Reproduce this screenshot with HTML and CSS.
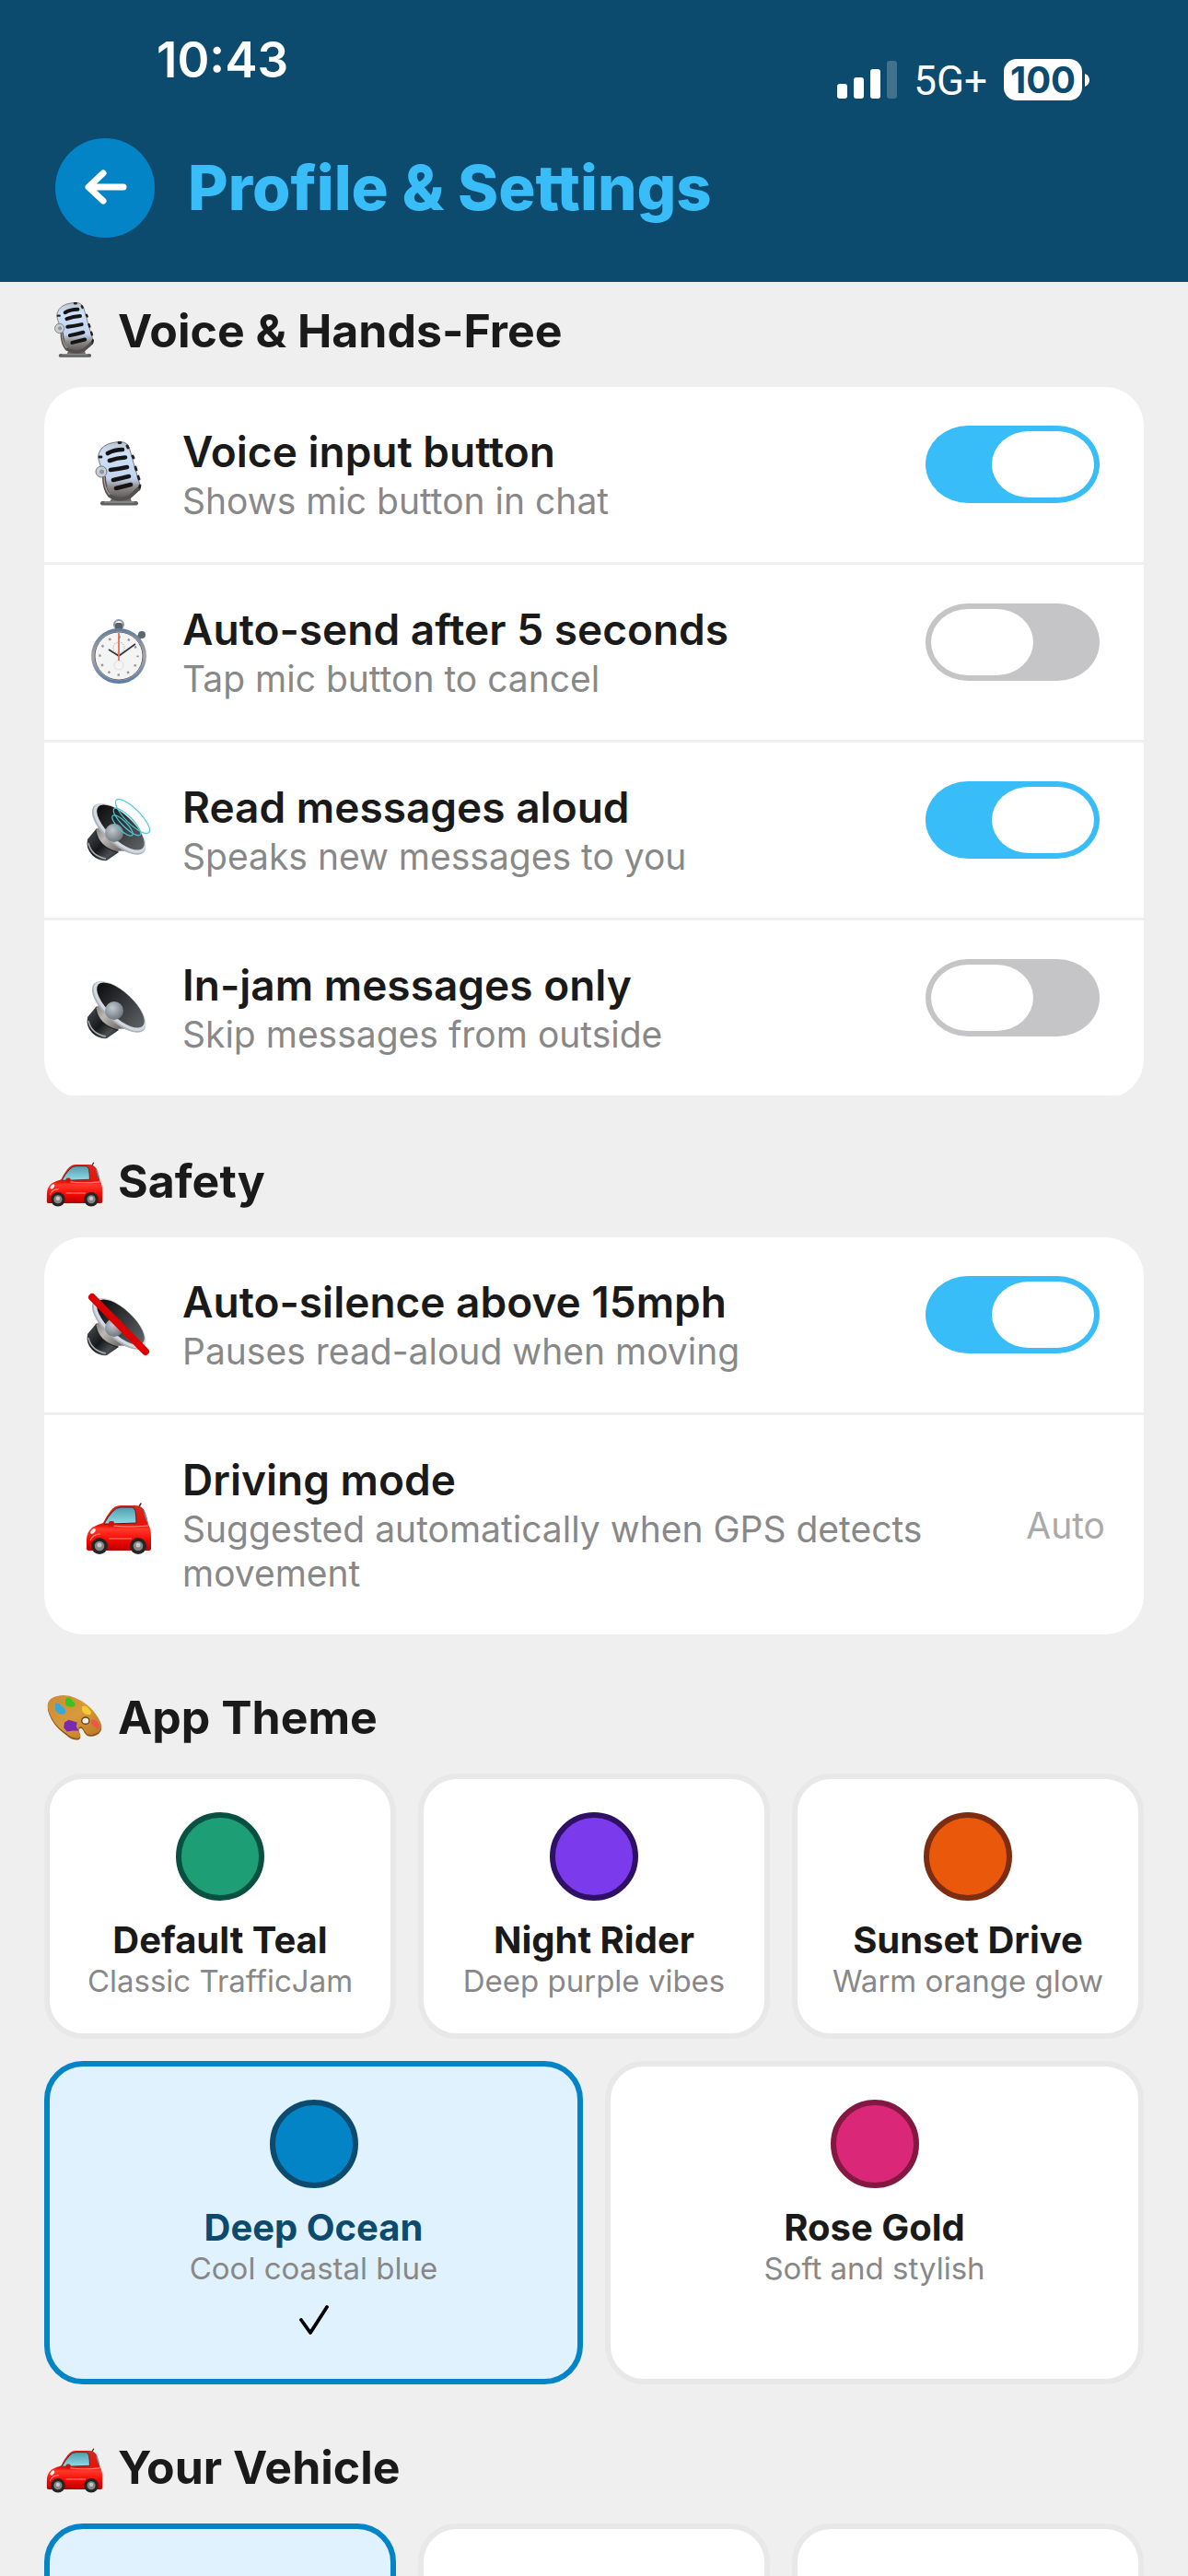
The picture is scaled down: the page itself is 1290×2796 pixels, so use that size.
FILE: index.html
```html
<!DOCTYPE html>
<html lang="en">

<head>
    <meta charset="UTF-8">
    <meta name="viewport" content="width=device-width, initial-scale=1.0">
    <title>Profile &amp; Settings</title>
    <link rel="stylesheet" href="styles.css">
</head>

<body>

    <!-- shared icons -->
    <svg class="sprite" aria-hidden="true">
        <defs>
            <linearGradient id="carRed" x1="0" y1="0" x2="0" y2="1">
                <stop offset="0" stop-color="#d9271d"/>
                <stop offset=".45" stop-color="#e81208"/>
                <stop offset=".52" stop-color="#ff3a2c"/>
                <stop offset=".75" stop-color="#f90a04"/>
                <stop offset="1" stop-color="#b80000"/>
            </linearGradient>
            <linearGradient id="glass" x1="0" y1="0" x2="0" y2="1">
                <stop offset="0" stop-color="#4f9db0"/>
                <stop offset="1" stop-color="#93dbe6"/>
            </linearGradient>
            <linearGradient id="micBody" x1="0" y1="0" x2="0" y2="1">
                <stop offset="0" stop-color="#b9c3cd"/>
                <stop offset=".2" stop-color="#cfe0fa"/>
                <stop offset=".65" stop-color="#c2d3ee"/>
                <stop offset=".8" stop-color="#8d8a88"/>
                <stop offset="1" stop-color="#5a5856"/>
            </linearGradient>
            <linearGradient id="magnet" x1="0" y1="0" x2="1" y2="1">
                <stop offset="0" stop-color="#4d5257"/>
                <stop offset=".5" stop-color="#15181b"/>
                <stop offset=".75" stop-color="#4a4e52"/>
                <stop offset="1" stop-color="#1c1e20"/>
            </linearGradient>
            <linearGradient id="neck" x1="0" y1="0" x2="1" y2="1">
                <stop offset="0" stop-color="#5d5c5a"/>
                <stop offset=".4" stop-color="#bdb9b4"/>
                <stop offset="1" stop-color="#3c3b3a"/>
            </linearGradient>
            <linearGradient id="cone" x1="0" y1="0" x2="1" y2="0">
                <stop offset="0" stop-color="#0c0d0e"/>
                <stop offset="1" stop-color="#5d6165"/>
            </linearGradient>
            <radialGradient id="dome" cx=".4" cy=".35" r=".7">
                <stop offset="0" stop-color="#c3cad3"/>
                <stop offset="1" stop-color="#6b7178"/>
            </radialGradient>
            <linearGradient id="wood" x1="0" y1="0" x2="1" y2="1">
                <stop offset="0" stop-color="#c98c36"/>
                <stop offset=".5" stop-color="#d99a3c"/>
                <stop offset="1" stop-color="#b87422"/>
            </linearGradient>
            <linearGradient id="steel" x1="0" y1="0" x2="0" y2="1">
                <stop offset="0" stop-color="#5f7f9f"/>
                <stop offset=".5" stop-color="#a9a6a6"/>
                <stop offset="1" stop-color="#5d7ea8"/>
            </linearGradient>

            <symbol id="car" viewBox="0 0 72 72">
                <path d="M57 18 60 13" stroke="#333" stroke-width="1.5" stroke-linecap="round"/>
                <path d="M1 62V53Q1 44 7 39Q12 36 19 34Q23 26 27 21Q31 15 38 15H54Q61 15 64 21Q67 28 68 36Q71 40 71 48V62Q71 64 68 64H4Q1 64 1 62Z" fill="url(#carRed)"/>
                <path d="M20 35Q25 26 29 22Q33 17 38 17H50Q53 17 54 21Q55 27 55 34L28 35Z" fill="url(#glass)" stroke="#54211d" stroke-width="1"/>
                <path d="M63 20Q67 27 68 35Q64 29 63 20Z" fill="#5fa6b6"/>
                <path d="M30 37Q45 39 68 37" stroke="#ff8c80" stroke-width="1.2" fill="none"/>
                <path d="M25 51H50M5 53Q8 46 16 46" stroke="#ff8c80" stroke-width="1.2" fill="none"/>
                <ellipse cx="8" cy="43" rx="3.5" ry="2" transform="rotate(-50 8 43)" fill="#fff1ef"/>
                <rect x="25" y="32" width="6" height="6" rx="2" fill="#d80f08"/>
                <circle cx="15" cy="59" r="9" fill="#252525"/>
                <circle cx="15" cy="59" r="5.3" fill="#858585"/>
                <circle cx="15" cy="58" r="2.5" fill="#c8c8c8"/>
                <circle cx="57" cy="59" r="9" fill="#252525"/>
                <circle cx="57" cy="59" r="5.3" fill="#858585"/>
                <circle cx="57" cy="58" r="2.5" fill="#c8c8c8"/>
            </symbol>

            <symbol id="mic" viewBox="0 0 72 72">
                <path d="M30 58H48L50 66H26Z" fill="#6e6c6a"/>
                <path d="M14 14Q17 3 32 1Q44-1 47 6L58 44Q61 50 57 54Q48 63 36 62Q27 61 24 50L15 23Q13 18 14 14Z" fill="url(#micBody)" stroke="#77777a" stroke-width="1"/>
                <path d="M36 1.5H38M45 5L46 7M51 16L52 18M54 28L55 31M57 38L58 41M59 48 58 52M15 17H17" stroke="#222" stroke-width="2.8" stroke-linecap="round"/>
                <path d="M24 13Q31 9 40 9M26 21Q34 18 43 17.5M27 31Q36 30 45 28M30 42Q39 40 47 38M33 51Q41 49 49 47" stroke="#141414" stroke-width="4.6" stroke-linecap="round" fill="none"/>
                <path d="M20 38Q20 52 26 59Q37 66 48 60L58 51" stroke="#54504e" stroke-width="4" fill="none"/>
                <path d="M20 38Q20 51 26 58" stroke="#aaa5a1" stroke-width="1.2" fill="none"/>
                <circle cx="17" cy="33" r="6" fill="#c9cdd1" stroke="#777" stroke-width="1"/>
                <circle cx="17.5" cy="33" r="2.5" fill="#8799ad"/>
                <rect x="16" y="65" width="41" height="4.5" rx="2.2" fill="#5e6060"/>
                <path d="M20 66H53" stroke="#a8abab" stroke-width="1"/>
            </symbol>

            <symbol id="stopwatch" viewBox="0 0 72 72">
                <circle cx="36" cy="6" r="5" fill="none" stroke="#8b96a3" stroke-width="2"/>
                <rect x="32" y="4" width="8" height="8" rx="2" fill="#59616b"/>
                <path d="M55 22 60 18" stroke="#59616b" stroke-width="5"/>
                <circle cx="61" cy="17" r="4" fill="#5d6670"/>
                <circle cx="36" cy="40" r="28.2" fill="#f4f4f4" stroke="url(#steel)" stroke-width="3.5"/>
                <circle cx="36" cy="40" r="26" fill="none" stroke="#3f3a3d" stroke-width=".8"/>
                <circle cx="36" cy="40" r="20.5" fill="none" stroke="#999" stroke-width="2.5" stroke-dasharray="2.5 8.23" stroke-dashoffset="1.2"/>
                <circle cx="36" cy="31" r="6" fill="none" stroke="#bbb" stroke-width="1.5" stroke-dasharray="1 1.5"/>
                <circle cx="36" cy="50" r="5" fill="none" stroke="#ddd" stroke-width="1"/>
                <path d="M36 40 54 27M36 40 25 33" stroke="#333a42" stroke-width="1.8"/>
                <path d="M36 15V45" stroke="#ee6a50" stroke-width="1.8"/>
            </symbol>

            <symbol id="speaker" viewBox="0 0 72 72">
                <path d="M12 34 2 46Q0 56 7 63Q14 70 23 69L36 60Z" fill="url(#magnet)"/>
                <path d="M3 50Q6 64 22 67" stroke="#a7abae" stroke-width="1.5" fill="none"/>
                <path d="M14 22Q17 31 11 37Q14 54 34 59Q42 57 52 62Z" fill="url(#neck)"/>
                <path d="M11 37Q14 54 34 60" stroke="#222" stroke-width="1.2" fill="none"/>
                <ellipse cx="36" cy="35" rx="37" ry="16" transform="rotate(43 36 35)" fill="#aab1bb"/>
                <ellipse cx="37" cy="34" rx="36" ry="15.5" transform="rotate(43 37 34)" fill="#d3d9e1"/>
                <ellipse cx="38" cy="33" rx="33" ry="13.5" transform="rotate(43 38 33)" fill="url(#cone)"/>
                <circle cx="31" cy="39" r="10" fill="url(#dome)"/>
            </symbol>

            <symbol id="palette" viewBox="3 3 68 68">
                <path d="M5 23Q6 14 20 12Q30 11 38 15Q50 20 58 29Q66 38 69 48Q70 55 63 58Q57 61 52 59Q48 55 47 52Q44 48 42 52Q42 55 44 60Q44 64 39 64Q32 63 27 58Q18 52 13 45Q4 32 5 23Z" fill="#8a5419"/>
                <path d="M5 21Q6 13 20 11Q30 10 38 14Q50 19 58 28Q66 37 69 46Q70 53 63 56Q57 59 52 57Q48 53 47 50Q44 46 42 50Q42 53 44 58Q44 62 39 62Q32 61 27 56Q18 50 13 43Q4 30 5 21Z" fill="url(#wood)"/>
                <path d="M26 15Q31 11 35 18Q40 21 36 24Q29 26 26 21Z" fill="#3cc21f"/>
                <path d="M14 21Q18 18 22 24Q29 28 25 33Q18 35 14 28Z" fill="#35a8dc"/>
                <path d="M46 24Q51 22 54 27Q59 32 55 34Q48 34 46 29Z" fill="#f5cb31"/>
                <path d="M57 40Q62 39 65 44Q68 50 65 50Q59 48 57 44Z" fill="#ef5648"/>
                <path d="M25 43 30 40 34 41 40 43 39 48 42 53 35 53 28 54 24 49Z" fill="#7b2aae"/>
                <ellipse cx="50" cy="41" rx="4.5" ry="4" fill="#efefef" stroke="#6e4314" stroke-width="1.5"/>
            </symbol>
        </defs>
    </svg>

    <header class="header">
        <div class="status">
            <span class="time">10:43</span>
            <div class="signals">
                <svg width="65" height="41" viewBox="0 0 65 41" fill="#fff">
                    <rect x="0" y="25" width="11" height="16" rx="3"/>
                    <rect x="18" y="18" width="11" height="23" rx="3"/>
                    <rect x="36" y="9" width="11" height="32" rx="3"/>
                    <rect x="54" y="0" width="11" height="41" rx="3" opacity=".22"/>
                </svg>
                <span class="network">5G+</span>
                <div class="battery">
                    <span class="level">100</span>
                    <svg width="5" height="14" viewBox="0 0 5 14"><path d="M0 0Q5 2 5 7Q5 12 0 14Z" fill="#fff"/></svg>
                </div>
            </div>
        </div>
        <div class="title-bar">
            <button class="back" aria-label="Back">
                <svg width="48" height="40" viewBox="0 0 48 40" fill="none" stroke="#fff" stroke-width="7" stroke-linecap="round" stroke-linejoin="round">
                    <path d="M44 19H7M22 4 6 19 22 34"/>
                </svg>
            </button>
            <h1>Profile &amp; Settings</h1>
        </div>
    </header>

    <main>
        <section>
            <h2><svg class="emoji"><use href="#mic"/></svg>Voice &amp; Hands-Free</h2>
            <div class="card">
                <div class="row">
                    <svg class="icon"><use href="#mic"/></svg>
                    <label class="text" for="voice">
                        <span class="name">Voice input button</span>
                        <span class="desc">Shows mic button in chat</span>
                    </label>
                    <input class="toggle" type="checkbox" id="voice" checked>
                </div>
                <div class="row">
                    <svg class="icon"><use href="#stopwatch"/></svg>
                    <label class="text" for="autosend">
                        <span class="name">Auto-send after 5 seconds</span>
                        <span class="desc">Tap mic button to cancel</span>
                    </label>
                    <input class="toggle" type="checkbox" id="autosend">
                </div>
                <div class="row">
                    <svg class="icon" viewBox="0 0 72 72">
                        <use href="#speaker"/>
                        <g fill="none" stroke="#4cc8d8" stroke-width="1.2">
                            <ellipse cx="51" cy="21" rx="25" ry="8" transform="rotate(45 51 21)"/>
                            <ellipse cx="45" cy="27" rx="20" ry="6" transform="rotate(45 45 27)"/>
                            <ellipse cx="40" cy="31" rx="15" ry="5" transform="rotate(45 40 31)"/>
                        </g>
                    </svg>
                    <label class="text" for="read">
                        <span class="name">Read messages aloud</span>
                        <span class="desc">Speaks new messages to you</span>
                    </label>
                    <input class="toggle" type="checkbox" id="read" checked>
                </div>
                <div class="row">
                    <svg class="icon"><use href="#speaker"/></svg>
                    <label class="text" for="injam">
                        <span class="name">In-jam messages only</span>
                        <span class="desc">Skip messages from outside</span>
                    </label>
                    <input class="toggle" type="checkbox" id="injam">
                </div>
            </div>
        </section>

        <section>
            <h2><svg class="emoji"><use href="#car"/></svg>Safety</h2>
            <div class="card">
                <div class="row">
                    <svg class="icon" viewBox="0 0 72 72">
                        <use href="#speaker"/>
                        <path d="M7 6 65 65" stroke="#dc0000" stroke-width="8" stroke-linecap="round"/>
                    </svg>
                    <label class="text" for="silence">
                        <span class="name">Auto-silence above 15mph</span>
                        <span class="desc">Pauses read-aloud when moving</span>
                    </label>
                    <input class="toggle" type="checkbox" id="silence" checked>
                </div>
                <div class="row plain">
                    <svg class="icon"><use href="#car"/></svg>
                    <div class="text">
                        <span class="name">Driving mode</span>
                        <span class="desc">Suggested automatically when GPS detects movement</span>
                    </div>
                    <span class="value">Auto</span>
                </div>
            </div>
        </section>

        <section>
            <h2><svg class="emoji"><use href="#palette"/></svg>App Theme</h2>
            <div class="grid">
                <button class="tile">
                    <span class="swatch teal"></span>
                    <span class="theme">Default Teal</span>
                    <span class="note">Classic TrafficJam</span>
                </button>
                <button class="tile">
                    <span class="swatch purple"></span>
                    <span class="theme">Night Rider</span>
                    <span class="note">Deep purple vibes</span>
                </button>
                <button class="tile">
                    <span class="swatch orange"></span>
                    <span class="theme">Sunset Drive</span>
                    <span class="note">Warm orange glow</span>
                </button>
                <button class="tile wide active">
                    <span class="swatch ocean"></span>
                    <span class="theme">Deep Ocean</span>
                    <span class="note">Cool coastal blue</span>
                    <svg class="check" width="32" height="51" viewBox="0 0 32 51" fill="none" stroke="#000" stroke-width="3.8" stroke-linecap="round" stroke-linejoin="round">
                        <path d="M2 23 12 37 30 9"/>
                    </svg>
                </button>
                <button class="tile wide">
                    <span class="swatch rose"></span>
                    <span class="theme">Rose Gold</span>
                    <span class="note">Soft and stylish</span>
                </button>
            </div>
        </section>

        <section>
            <h2><svg class="emoji"><use href="#car"/></svg>Your Vehicle</h2>
            <div class="grid vehicles">
                <div class="tile active"></div>
                <div class="tile"></div>
                <div class="tile"></div>
            </div>
        </section>
    </main>

</body>

</html>
```

FILE: styles.css
```css
* {
    box-sizing: border-box;
}

body {
    margin: 0;
    height: 100vh;
    display: flex;
    flex-direction: column;
    overflow: hidden;
    background-color: #efefef;
    color: #1a1a1a;
    font-family: Inter, "Liberation Sans", sans-serif;
}

.sprite {
    position: absolute;
    width: 0;
    height: 0;
}

h1, h2 {
    margin: 0;
}

button {
    font-family: inherit;
    color: inherit;
    cursor: pointer;
}

/* header */
.header {
    flex-shrink: 0;
    background-color: #0c4a6e;
    padding-bottom: 48px;
}

.status {
    display: flex;
    justify-content: space-between;
    align-items: flex-start;
    height: 150px;
    padding: 35px 107px 0 170px;
    color: white;
}

.time {
    font-size: 53px;
    line-height: 60px;
    font-weight: 600;
}

.signals {
    display: flex;
    align-items: center;
    gap: 18px;
    height: 45px;
    margin-top: 29px;
}

.network {
    font-family: Roboto, Inter, sans-serif;
    font-size: 44px;
    line-height: 45px;
    padding-top: 4px;
}

.battery {
    display: flex;
    align-items: center;
    gap: 3px;
}

.level {
    width: 85px;
    border-radius: 14px;
    background-color: white;
    color: #0c4a6e;
    font-size: 40px;
    line-height: 45px;
    font-weight: 700;
    text-align: center;
}

.title-bar {
    display: flex;
    align-items: center;
    gap: 36px;
    padding: 0 60px;
}

.back {
    display: flex;
    justify-content: center;
    align-items: center;
    width: 108px;
    height: 108px;
    padding: 0;
    border: none;
    border-radius: 50%;
    background-color: #0284c7;
}

h1 {
    color: #38bdf8;
    font-size: 67px;
    line-height: 80px;
    font-weight: 800;
}

/* sections */
main {
    flex: 1;
    display: flex;
    flex-direction: column;
    gap: 61px;
    padding: 24px 48px;
    overflow-y: auto;
    scrollbar-width: none;
}

section {
    flex-shrink: 0;
}

h2 {
    display: flex;
    align-items: center;
    gap: 16px;
    height: 58px;
    margin-bottom: 32px;
    padding-left: 2px;
    font-size: 50px;
    line-height: 58px;
    font-weight: 700;
}

.emoji {
    width: 62px;
    height: 62px;
}

.card {
    border-radius: 42px;
    background-color: white;
    overflow: hidden;
}

.row {
    display: flex;
    align-items: center;
    gap: 30px;
    padding: 42px;
    border-bottom: 3px solid #efefef;
}

.plain {
    border-bottom: none;
}

.icon {
    flex-shrink: 0;
    width: 78px;
    height: 72px;
}

.text {
    flex: 1;
    display: flex;
    flex-direction: column;
    gap: 2px;
}

.name {
    font-size: 46px;
    line-height: 56px;
    font-weight: 600;
}

.desc {
    color: #888;
    font-size: 39px;
    line-height: 48px;
}

.value {
    color: #aaa;
    font-size: 39px;
}

/* switch */
.toggle {
    appearance: none;
    align-self: flex-start;
    width: 189px;
    height: 84px;
    margin: 0 6px 0 0;
    padding: 6px;
    border-radius: 46px / 42px;
    background-color: #c5c5c7;
    display: flex;
    cursor: pointer;
}

.toggle::before {
    content: "";
    width: 111px;
    border-radius: 40px / 36px;
    background-color: white;
}

.toggle:checked {
    background-color: #38bdf8;
    justify-content: flex-end;
}

/* themes */
.grid {
    display: grid;
    grid-template-columns: repeat(6, 1fr);
    gap: 24px;
}

.tile {
    grid-column: span 2;
    display: flex;
    flex-direction: column;
    align-items: center;
    justify-content: flex-start;
    padding: 36px 12px;
    border: 6px solid #e8e8e8;
    border-radius: 42px;
    background-color: white;
}

.wide {
    grid-column: span 3;
}

.active {
    border-color: #0284c7;
    background-color: #e0f2fe;
}

.swatch {
    width: 96px;
    height: 96px;
    margin-bottom: 20px;
    border: 6px solid;
    border-radius: 50%;
}

.teal {
    background-color: #1d9e75;
    border-color: #085041;
}

.purple {
    background-color: #7c3aed;
    border-color: #2e1065;
}

.orange {
    background-color: #ea580c;
    border-color: #7c2d12;
}

.ocean {
    background-color: #0284c7;
    border-color: #0c4a6e;
}

.rose {
    background-color: #db2777;
    border-color: #831843;
}

.theme {
    font-size: 40px;
    line-height: 46px;
    font-weight: 700;
}

.active .theme {
    color: #0c4a6e;
}

.note {
    color: #888;
    font-size: 33px;
    line-height: 42px;
}

.check {
    margin-top: 12px;
}

.vehicles .tile {
    min-height: 288px;
}
```
